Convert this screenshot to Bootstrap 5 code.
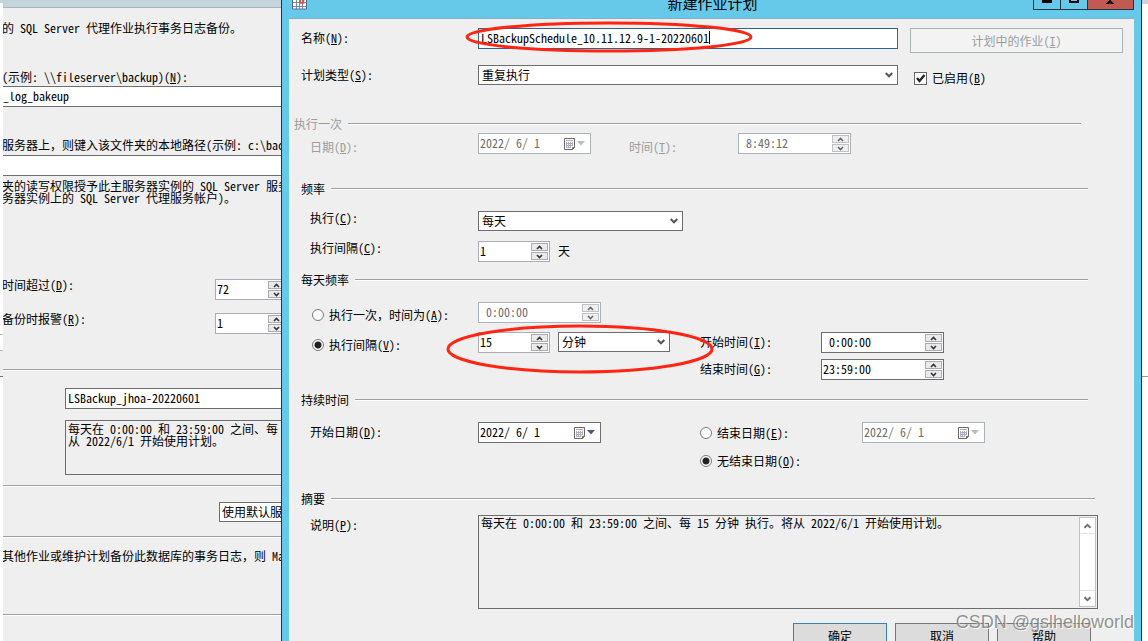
<!DOCTYPE html>
<html lang="zh-CN">
<head>
<meta charset="utf-8">
<meta name="viewport" content="width=device-width, initial-scale=1">
<title>新建作业计划</title>
<link rel="stylesheet" href="https://cdn.jsdelivr.net/npm/bootstrap@5.3.0/dist/css/bootstrap.min.css">
<style>
:root { --face:#efefef; --frame:#66c9ea; --edge:#6d6d6d; --soft:#abadb3; --off:#a0a0a0; }
body { font-family:"Noto Sans Mono CJK SC","Liberation Mono","Noto Sans CJK SC",monospace; font-size:12px; line-height:12px; color:#000; background:#fff; }
input, select, textarea, button { font:inherit; color:inherit; border-radius:0; }
.desk { height:100vh; }
.desk label, .say { white-space:pre; line-height:20px; }

/* window behind */
.under { flex:0 0 281px; padding-left:3px; background:linear-gradient(#c5d6dc 0 3px,#fff 3px 334px,#b8b8b8 334px 335px,#fff 335px 350px,#b8b8b8 350px 351px,#efefef 351px 376px,#777 376px 377px,#fff 377px); }
.under-face { background:var(--face); min-height:100%; }
.under-top { height:8px; background:#c3d5db; border-bottom:1px solid #aab4b9; }
.clip { margin-left:-1px; white-space:pre; }
.desk label.tight { line-height:12px; }
.wide-box { width:100%; height:21px; border:solid var(--edge); border-width:1px 0; background:#fff; padding:0 0 2px; display:block; }
.rule { height:2px; border-top:1px solid var(--off); background:#fff; }
.cut { border:1px solid var(--edge); border-right:0; background:#fff; display:block; margin-left:62px; width:216px; padding:0 2px; }

/* fields */
.box { border:1px solid var(--edge); background:#fff; height:21px; padding:0 2px 2px; min-width:0; outline:0; }
.box.drop { height:20px; appearance:none; padding:0 16px 0 3px; line-height:18px;
  background:#fff url("data:image/svg+xml,%3Csvg xmlns='http://www.w3.org/2000/svg' width='8' height='6'%3E%3Cpath d='M.7 1 4 4.300 7.300 1' fill='none' stroke='%23555' stroke-width='2'/%3E%3C/svg%3E") no-repeat right 4px center; }
.spin { border:1px solid var(--soft); background:#fff; height:21px; }
.spin input, .dater input { border:0; outline:0; background:none; padding:0 1px 2px; width:0; min-width:0; flex:1; }
.spin.deep, .dater { border-color:var(--edge); }
.spin .steps { width:19px; padding:1px; gap:1px; }
.steps button { flex:1; min-height:0; padding:0; border:1px solid var(--soft); background:#eaeaea; display:flex; align-items:center; justify-content:center; }
.dater { border:1px solid var(--edge); background:#fff; height:21px; }
.dater button { border:0; background:none; padding:0 5px 0 0; display:flex; align-items:center; gap:2px; color:#3f5d85; }
.faded { color:#6d6d6d; border-color:#abb3b6 !important; }
.faded .steps { opacity:.75; }
.faded.dater button { color:#bcbcb4; }
.w-72 { width:72px; } .w-113 { width:113px; } .w-123 { width:123px; } .w-112 { width:112px; } .w-205 { width:205px; }

/* dialog */
.dlg { background:var(--frame); border:solid #1f3641; border-width:0 1px; padding:0 7px; min-width:0; }
.cap { flex:none; height:19px; border-bottom:1px solid #84b0c4; }
.cap h1 { font:15px/18px "Noto Sans CJK SC",sans-serif; margin:-6px 0 0; }
.cap-btns { height:10px; }
.cap-btns button { border:1px solid #1f3641; border-top:0; margin-left:-1px; background:none; padding:0; width:28px; height:10px; display:flex; justify-content:center; align-items:flex-start; }
.cap-btns .shut { width:47px; background:#c25a51; }
.face { background:var(--face); padding-top:9px; }
.duo, .trio { display:grid; align-items:start; }
.duo { grid-template-columns:189px minmax(0,420fr) minmax(0,236fr); }
.trio { grid-template-columns:189px minmax(0,222fr) minmax(0,434fr); }
.t1 { padding-left:12px; } .t2 { padding-left:21px; } .t3 { padding-left:23px; }
.pick { display:flex; align-items:center; gap:5px; }
.grp { display:flex; align-items:center; height:12px; padding-left:12px; gap:6px; }
.grp::after { content:""; flex:1; height:2px; border-top:1px solid var(--off); background:#fff; }
.grp.near { padding-left:5px; }
.end46 { margin-right:46px; } .end53 { margin-right:53px; } .end39 { margin-right:39px; }
.dim { color:#9c9c9c; }
.low { padding-top:4px; }
.desk label.high { line-height:14px; }
.s3 { margin-top:3px; } .s4 { margin-top:4px; } .s7 { margin-top:7px; } .s8 { margin-top:8px; } .s10 { margin-top:10px; } .s12 { margin-top:12px; }
.s14 { margin-top:14px; } .s16 { margin-top:16px; } .s22 { margin-top:22px; } .s26 { margin-top:26px; } .s30 { margin-top:30px; }
.jobs { height:25px; margin:0 11px 0 12px; border:1px solid #adb2b5; background:#f3f3f3; color:#9c9c9c; }
.tick { appearance:none; width:13px; height:13px; border:1px solid #666; background:#fff; margin:0; }
.tick:checked { background:#fff url("data:image/svg+xml,%3Csvg xmlns='http://www.w3.org/2000/svg' width='11' height='11'%3E%3Cpath d='M2 5 4.500 8 9.500 2' fill='none' stroke='%23222' stroke-width='2.400'/%3E%3C/svg%3E"); }
.dot { appearance:none; width:12px; height:12px; border:1px solid #777; border-radius:50%; background:#fff; margin:0; flex:none; }
.dot:checked { background:radial-gradient(circle,#222 0 3px,#fff 4px); }
.name-box { border-color:#2f628f; }
.caret { left:231px; top:3px; width:1px; height:13px; background:#000; }
.ring { fill:none; stroke:#ff2512; stroke-width:3; z-index:3; pointer-events:none; }
.ring-a { left:-13px; top:-8px; } .ring-b { left:-32px; top:-8px; }
.note { height:94px; border:1px solid var(--edge); margin-right:36px; padding:1px; }
.note textarea { border:0; background:none; resize:none; outline:0; flex:1; padding:0 0 0 1px; overflow:hidden; line-height:12px; }
.bar { width:17px; border:1px solid #c2c2c2; background:#fff; }
.bar button { height:16px; border:0; padding:0; background:#fff; display:flex; align-items:center; justify-content:center; }
.feet { gap:8px; padding-right:43px; }
.feet button { width:94px; height:26px; border:1px solid #777; background:#dcdcdc; padding:0; }
.feet .main-btn { border-color:#3c7fb1; }
.brim { flex:0 0 6px; background:linear-gradient(#ccd2e3 0 4px,#fff 4px 376px,#999 376px 377px,#fff 377px); }
.stamp { right:14px; bottom:8px; font:18px/22px "Liberation Sans",sans-serif; color:rgba(120,120,120,.8); text-shadow:1px 1px 0 rgba(255,255,255,.8); z-index:5; pointer-events:none; }
</style>
</head>
<body class="overflow-hidden">
<svg class="d-none">
  <symbol id="up" viewBox="0 0 7 5"><path d="M1 4 3.500 1.500 6 4" fill="none" stroke="#333" stroke-width="1.600"/></symbol>
  <symbol id="dn" viewBox="0 0 7 5"><path d="M1 1 3.500 3.500 6 1" fill="none" stroke="#333" stroke-width="1.600"/></symbol>
  <symbol id="cal" viewBox="0 0 11 12"><path d="M.5.5h10v9l-2 2h-8z" fill="#fff" stroke="#75645f"/><path d="M2 2.500h7M2.500 4v6M4.500 4v6M6.500 4v6M8.500 4v4M2 5.500h7M2 7.500h7M2 9.500h5" fill="none" stroke="#a9afc0"/><path d="M8.500 11.500v-2h2" fill="none" stroke="#75645f"/></symbol>
  <symbol id="tri" viewBox="0 0 8 5"><path d="M0 0h8L4 4.500z" fill="currentColor"/></symbol>
</svg>

<main class="desk d-flex position-relative overflow-hidden">
  <section class="under overflow-hidden">
    <div class="under-face overflow-hidden">
      <div class="under-top"></div>
      <div class="clip say" style="padding-top:10px">的 SQL Server 代理作业执行事务日志备份。</div>
      <label class="clip d-block" for="share" style="margin-top:29px;height:19px">(示例: \\fileserver\backup)(<u>N</u>):</label>
      <input class="wide-box" id="share" value="_log_bakeup">
      <label class="clip d-block" for="local" style="margin-top:28px">服务器上，则键入该文件夹的本地路径(示例: c:\backup):</label>
      <input class="wide-box" id="local">
      <div class="clip" style="margin-top:4px">夹的读写权限授予此主服务器实例的 SQL Server 服务帐户
务器实例上的 SQL Server 代理服务帐户)。</div>
      <div class="d-flex justify-content-between align-items-start" style="margin-top:75px"><label class="clip tight" for="old">时间超过(<u>D</u>):</label>
        <div class="spin w-72 d-flex" style="margin-right:-6px"><input id="old" value="72"><span class="steps d-flex flex-column"><button aria-label="增加"><svg width="7" height="5"><use href="#up"/></svg></button><button aria-label="减少"><svg width="7" height="5"><use href="#dn"/></svg></button></span></div></div>
      <div class="d-flex justify-content-between align-items-start" style="margin-top:13px"><label class="clip tight" for="warn">备份时报警(<u>R</u>):</label>
        <div class="spin w-72 d-flex" style="margin-right:-6px"><input id="warn" value="1"><span class="steps d-flex flex-column"><button aria-label="增加"><svg width="7" height="5"><use href="#up"/></svg></button><button aria-label="减少"><svg width="7" height="5"><use href="#dn"/></svg></button></span></div></div>
      <div class="rule" style="margin-top:35px"></div>
      <input class="cut" aria-label="作业名称" value="LSBackup_jhoa-20220601" style="margin-top:17px;height:21px;padding-bottom:2px">
      <div class="cut text-nowrap" style="margin-top:11px;height:55px;background:none;padding-top:2px">每天在 0:00:00 和 23:59:00 之间、每<br>从 2022/6/1 开始使用计划。</div>
      <div class="rule" style="margin-top:10px"></div>
      <select class="cut overflow-hidden" aria-label="压缩" style="margin:15px 0 0 216px;width:200px;height:20px;appearance:none"><option>使用默认服务器设置</option></select>
      <div class="rule" style="margin-top:14px"></div>
      <div class="clip say" style="margin-top:8px">其他作业或维护计划备份此数据库的事务日志，则 Management</div>
      <div class="rule" style="margin-top:48px"></div>
    </div>
  </section>

  <form class="dlg flex-grow-1 d-flex flex-column" onsubmit="return false">
    <header class="cap d-flex justify-content-between align-items-start">
      <svg width="102" height="11" viewBox="0 0 102 11"><path d="M3.500 0v9h14V0" fill="#fff" stroke="#596b8d"/><path d="M4 2.500h13M4 6.500h13M7.500 0v9M10.500 0v9M13.500 0v9" stroke="#7189b4"/><path d="M11.500 0v3h3V0" fill="none" stroke="#e2532b" stroke-width="1.500"/></svg>
      <h1>新建作业计划</h1>
      <div class="cap-btns d-flex">
        <button aria-label="最小化"><svg width="10" height="3"><path d="M0 0h10v3H0z"/></svg></button>
        <button aria-label="最大化"><svg width="10" height="3"><path d="M1 0v2h8V0" fill="none" stroke="#000" stroke-width="2"/></svg></button>
        <button class="shut" aria-label="关闭"><svg width="10" height="4"><path d="M5 0 9 4H6L5 2 4 4H1z" stroke="#000" stroke-width=".5"/></svg></button>
      </div>
    </header>
    <div class="face flex-grow-1">
      <div class="duo">
        <label class="t1" for="nm">名称(<u>N</u>):</label>
        <div class="position-relative d-flex"><input class="box name-box w-100" id="nm" value="LSBackupSchedule_10.11.12.9-1-20220601"><i class="caret position-absolute"></i>
          <svg class="ring ring-a position-absolute" width="290" height="34"><ellipse cx="144" cy="17" rx="142" ry="14"/></svg></div>
        <button class="jobs" disabled>计划中的作业(<u>I</u>)</button>
      </div>
      <div class="duo s12">
        <label class="t1" for="kind">计划类型(<u>S</u>):</label>
        <select class="box drop w-100" id="kind"><option>重复执行</option></select>
        <div class="pick s3 ps-3"><input class="tick" type="checkbox" id="on" checked><label for="on">已启用(<u>B</u>)</label></div>
      </div>

      <div class="grp near end53 dim s30">执行一次</div>
      <div class="trio s3 dim">
        <label class="t2 low" for="d1">日期(<u>D</u>):</label>
        <div class="dater faded w-113 d-flex"><input id="d1" value="2022/ 6/ 1" disabled><button disabled aria-label="日历"><svg width="11" height="12"><use href="#cal"/></svg><svg width="8" height="5"><use href="#tri"/></svg></button></div>
        <div class="d-flex" style="margin-left:-71px"><label class="low" for="h1" style="width:109px">时间(<u>T</u>):</label>
          <div class="spin faded w-113 d-flex"><input id="h1" value=" 8:49:12" disabled><span class="steps d-flex flex-column"><button disabled aria-label="增加"><svg width="7" height="5"><use href="#up"/></svg></button><button disabled aria-label="减少"><svg width="7" height="5"><use href="#dn"/></svg></button></span></div></div>
      </div>

      <div class="grp end46 s26">频率</div>
      <div class="trio s16">
        <label class="t2 high" for="fq">执行(<u>C</u>):</label>
        <select class="box drop w-205" id="fq"><option>每天</option></select>
      </div>
      <div class="trio s10">
        <label class="t2 high" for="ev">执行间隔(<u>C</u>):</label>
        <div class="d-flex gap-2"><div class="spin w-72 d-flex"><input id="ev" value="1"><span class="steps d-flex flex-column"><button aria-label="增加"><svg width="7" height="5"><use href="#up"/></svg></button><button aria-label="减少"><svg width="7" height="5"><use href="#dn"/></svg></button></span></div><span class="say">天</span></div>
      </div>

      <div class="grp end46 s12">每天频率</div>
      <div class="trio s16">
        <div class="t3 pick s3"><input class="dot" type="radio" name="daily" id="once"><label for="once">执行一次，时间为(<u>A</u>):</label></div>
        <div class="spin faded w-123 d-flex"><input aria-label="时间为" value=" 0:00:00" disabled><span class="steps d-flex flex-column"><button disabled aria-label="增加"><svg width="7" height="5"><use href="#up"/></svg></button><button disabled aria-label="减少"><svg width="7" height="5"><use href="#dn"/></svg></button></span></div>
      </div>
      <div class="trio s7">
        <div class="t3 pick s3"><input class="dot" type="radio" name="daily" id="every" checked><label for="every">执行间隔(<u>V</u>):</label></div>
        <div class="d-flex gap-2 position-relative"><div class="spin w-72 d-flex"><input aria-label="间隔" value="15"><span class="steps d-flex flex-column"><button aria-label="增加"><svg width="7" height="5"><use href="#up"/></svg></button><button aria-label="减少"><svg width="7" height="5"><use href="#dn"/></svg></button></span></div>
          <select class="box drop w-112" aria-label="单位"><option>分钟</option></select>
          <svg class="ring ring-b position-absolute" width="270" height="52"><ellipse cx="134" cy="25" rx="132" ry="23"/></svg></div>
        <div class="d-flex"><label for="st" style="width:121px">开始时间(<u>I</u>):</label>
          <div class="spin deep w-123 d-flex"><input id="st" value=" 0:00:00"><span class="steps d-flex flex-column"><button aria-label="增加"><svg width="7" height="5"><use href="#up"/></svg></button><button aria-label="减少"><svg width="7" height="5"><use href="#dn"/></svg></button></span></div></div>
      </div>
      <div class="trio s4">
        <span></span><span></span>
        <div class="d-flex"><label for="en" style="width:121px">结束时间(<u>G</u>):</label>
          <div class="spin deep w-123 d-flex"><input id="en" value="23:59:00"><span class="steps d-flex flex-column"><button aria-label="增加"><svg width="7" height="5"><use href="#up"/></svg></button><button aria-label="减少"><svg width="7" height="5"><use href="#dn"/></svg></button></span></div></div>
      </div>

      <div class="grp end46 s14">持续时间</div>
      <div class="trio s16">
        <label class="t2" for="d2">开始日期(<u>D</u>):</label>
        <div class="dater w-123 d-flex"><input id="d2" value="2022/ 6/ 1"><button aria-label="日历"><svg width="11" height="12"><use href="#cal"/></svg><svg width="8" height="5"><use href="#tri"/></svg></button></div>
        <div class="d-flex"><div class="pick" style="width:162px"><input class="dot" type="radio" name="end" id="e1"><label for="e1">结束日期(<u>E</u>):</label></div>
          <div class="dater faded w-123 d-flex"><input aria-label="结束日期" value="2022/ 6/ 1" disabled><button disabled aria-label="日历"><svg width="11" height="12"><use href="#cal"/></svg><svg width="8" height="5"><use href="#tri"/></svg></button></div></div>
      </div>
      <div class="trio s8">
        <span></span><span></span>
        <div class="pick"><input class="dot" type="radio" name="end" id="e2" checked><label for="e2">无结束日期(<u>O</u>):</label></div>
      </div>

      <div class="grp end39 s22">摘要</div>
      <div class="d-flex s10">
        <label class="t2" for="tx" style="width:189px">说明(<u>P</u>):</label>
        <div class="note d-flex flex-grow-1"><textarea id="tx" readonly>每天在 0:00:00 和 23:59:00 之间、每 15 分钟 执行。将从 2022/6/1 开始使用计划。</textarea>
          <div class="bar d-flex flex-column justify-content-between"><button class="border-bottom" aria-label="向上"><svg width="9" height="6" opacity=".7"><use href="#up"/></svg></button><button class="border-top" aria-label="向下"><svg width="9" height="6" opacity=".7"><use href="#dn"/></svg></button></div></div>
      </div>
      <div class="feet d-flex justify-content-end s14"><button class="main-btn">确定</button><button>取消</button><button>帮助</button></div>
    </div>
  </form>
  <div class="brim"></div>
  <div class="stamp position-absolute">CSDN @gslhelloworld</div>
</main>
<script src="https://cdn.jsdelivr.net/npm/bootstrap@5.3.0/dist/js/bootstrap.bundle.min.js"></script>
</body>
</html>
